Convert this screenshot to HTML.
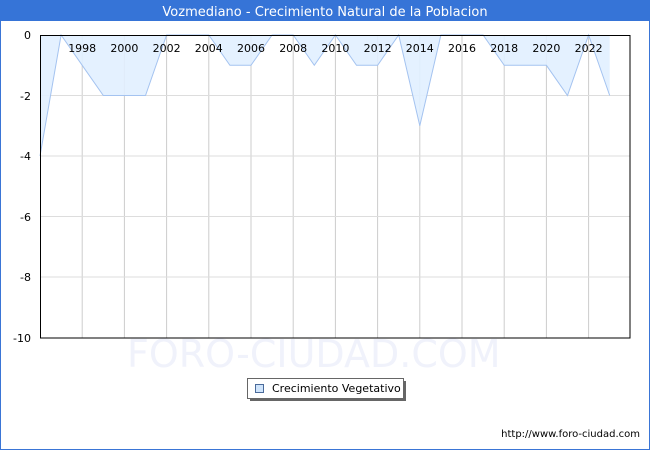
<!DOCTYPE html>
<html><head><meta charset="utf-8"><style>
html,body{margin:0;padding:0;background:#fff;}
body{width:650px;height:450px;overflow:hidden;}
</style></head><body>
<svg width="650" height="450" xmlns="http://www.w3.org/2000/svg" font-family="'DejaVu Sans','Liberation Sans',sans-serif">
<rect x="0.5" y="0.5" width="649" height="449" fill="#fff" stroke="#3a75d6"/>
<rect x="0" y="0" width="650" height="21" fill="#3674d7"/>
<text x="325" y="16" fill="#fff" font-size="13" text-anchor="middle">Vozmediano - Crecimiento Natural de la Poblacion</text>
<g stroke="#cccccc" stroke-width="1">
<line x1="82.2" y1="35" x2="82.2" y2="338"/><line x1="124.4" y1="35" x2="124.4" y2="338"/><line x1="166.6" y1="35" x2="166.6" y2="338"/><line x1="208.8" y1="35" x2="208.8" y2="338"/><line x1="251" y1="35" x2="251" y2="338"/><line x1="293.2" y1="35" x2="293.2" y2="338"/><line x1="335.4" y1="35" x2="335.4" y2="338"/><line x1="377.6" y1="35" x2="377.6" y2="338"/><line x1="419.8" y1="35" x2="419.8" y2="338"/><line x1="462" y1="35" x2="462" y2="338"/><line x1="504.2" y1="35" x2="504.2" y2="338"/><line x1="546.4" y1="35" x2="546.4" y2="338"/><line x1="588.6" y1="35" x2="588.6" y2="338"/>
</g>
<g stroke="#dddddd"><line x1="40" y1="95.5" x2="630" y2="95.5"/><line x1="40" y1="156" x2="630" y2="156"/><line x1="40" y1="216.5" x2="630" y2="216.5"/><line x1="40" y1="277" x2="630" y2="277"/></g>
<text x="127" y="367" font-size="38" fill="#f0f2fb" font-family="'DejaVu Sans',sans-serif">FORO-CIUDAD.COM</text>
<polygon fill="#e1efff" fill-opacity="0.9" stroke="none" points="40,35 40,156 61.1,35 82.2,65.3 103.3,95.5 124.4,95.5 145.5,95.5 166.6,35 187.7,35 208.8,35 229.9,65.3 251,65.3 272.1,35 293.2,35 314.3,65.3 335.4,35 356.5,65.3 377.6,65.3 398.7,35 419.8,125.8 440.9,35 462,35 483.1,35 504.2,65.3 525.3,65.3 546.4,65.3 567.5,95.5 588.6,35 609.7,95.5 609.7,35"/>
<polyline fill="none" stroke="#a4c3f0" stroke-width="1" points="40,156 61.1,35 82.2,65.3 103.3,95.5 124.4,95.5 145.5,95.5 166.6,35 187.7,35 208.8,35 229.9,65.3 251,65.3 272.1,35 293.2,35 314.3,65.3 335.4,35 356.5,65.3 377.6,65.3 398.7,35 419.8,125.8 440.9,35 462,35 483.1,35 504.2,65.3 525.3,65.3 546.4,65.3 567.5,95.5 588.6,35 609.7,95.5"/>
<rect x="40.5" y="35.5" width="589.5" height="302.5" fill="none" stroke="#000" stroke-width="1"/>
<g font-size="11" fill="#000" text-anchor="middle">
<text x="82.2" y="52">1998</text><text x="124.4" y="52">2000</text><text x="166.6" y="52">2002</text><text x="208.8" y="52">2004</text><text x="251" y="52">2006</text><text x="293.2" y="52">2008</text><text x="335.4" y="52">2010</text><text x="377.6" y="52">2012</text><text x="419.8" y="52">2014</text><text x="462" y="52">2016</text><text x="504.2" y="52">2018</text><text x="546.4" y="52">2020</text><text x="588.6" y="52">2022</text>
</g>
<g font-size="11" fill="#000" text-anchor="end">
<text x="31" y="39">0</text><text x="31" y="100">-2</text><text x="31" y="160">-4</text><text x="31" y="221">-6</text><text x="31" y="281">-8</text><text x="31" y="342">-10</text>
</g>
<rect x="250" y="381" width="156" height="20" fill="#666"/>
<rect x="247.5" y="378.5" width="156" height="20" fill="#fff" stroke="#666"/>
<rect x="255.5" y="384.5" width="8" height="8" fill="#cfe4fb" stroke="#4a6a9a"/>
<text x="272" y="392" font-size="11" fill="#000">Crecimiento Vegetativo</text>
<text x="640" y="437" font-size="10" fill="#000" text-anchor="end">http://www.foro-ciudad.com</text>
</svg>
</body></html>
